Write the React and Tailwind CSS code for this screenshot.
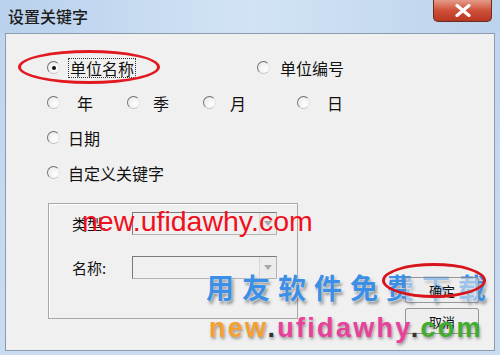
import React from 'react'

const cjk = "font-['Noto_Sans_CJK_SC','Noto_Sans',sans-serif]"

function Radio({ checked }) {
  return (
    <span className="relative w-[13px] h-[13px] shrink-0 rounded-full border-[1.5px] border-t-[#6f6f6f] border-l-[#6f6f6f] border-r-[#e4e4e4] border-b-[#c4c4c4] bg-[radial-gradient(circle_at_65%_65%,#ffffff,#e6e6e6)]">
      {checked && (
        <span className="absolute left-1/2 top-1/2 -translate-x-1/2 -translate-y-1/2 w-[4px] h-[4px] rounded-full bg-[#111]" />
      )}
    </span>
  )
}

function Option({ label, checked, width, gap = 'ml-[8px]', focus }) {
  return (
    <div className={`flex items-center ${width}`}>
      <Radio checked={checked} />
      <span
        className={`${gap} text-[16px] leading-none text-[#111] ${cjk} ${
          focus ? 'border border-dotted border-[#333] px-[1px] py-[1px]' : ''
        }`}
      >
        {label}
      </span>
    </div>
  )
}

function Combo() {
  return (
    <div className="w-[145px] h-[23px] flex border border-[#b4b4b4] border-t-[#7a7a7a] border-l-[#7a7a7a] bg-[#f0f0f0]">
      <div className="flex-1" />
      <div className="w-[17px] h-full flex items-center justify-center border-l border-[#d8d8d8] bg-[#ececec]">
        <svg width="8" height="5" viewBox="0 0 8 5">
          <path d="M0 0 L8 0 L4 5 Z" fill="#a8a8a8" />
        </svg>
      </div>
    </div>
  )
}

function Button({ label }) {
  return (
    <button className={`w-[74px] h-[26px] rounded-[3px] border border-[#707070]/70 bg-[#ececec]/55 text-[13px] leading-none text-[#111] ${cjk}`}>
      {label}
    </button>
  )
}

export default function App() {
  return (
    <div className="relative w-[500px] h-[355px] overflow-hidden bg-gradient-to-b from-[#bfd5ee] to-[#c9dcf0]">
      {/* title bar */}
      <div className="h-[33px] flex items-start justify-between bg-gradient-to-r from-[#b9d1ec] via-[#d2e3f5] to-[#bcd3ec]">
        <span className={`ml-[8px] mt-[6px] text-[16px] leading-[20px] font-medium text-[#1c1c1c] ${cjk}`}>设置关键字</span>
        <div className="mr-[8px] w-[59px] h-[22px] rounded-b-[5px] border border-t-0 border-[#6a2c22] bg-gradient-to-b from-[#e49a88] via-[#cf4f38] to-[#b83622] flex items-center justify-center">
          <svg width="16" height="13" viewBox="0 0 16 13">
            <path d="M2 1.5 L14 11.5 M14 1.5 L2 11.5" stroke="#fff" strokeWidth="3.2" strokeLinecap="round" />
          </svg>
        </div>
      </div>

      {/* dialog body */}
      <div className="mx-[5px] h-[318px] border border-[#8b9bb0] bg-[#f0f0f0] pt-[16px] pl-[41px]">
        <div className="flex h-[35px] items-center">
          <Option label="单位名称" checked focus width="w-[210px]" />
          <Option label="单位编号" width="w-[120px]" gap="ml-[10px]" />
        </div>
        <div className="flex h-[35px] items-center">
          <Option label="年" width="w-[80px]" gap="ml-[17px]" />
          <Option label="季" width="w-[76px]" gap="ml-[13px]" />
          <Option label="月" width="w-[94px]" gap="ml-[14px]" />
          <Option label="日" width="w-[60px]" gap="ml-[17px]" />
        </div>
        <div className="flex h-[35px] items-center">
          <Option label="日期" width="w-[120px]" />
        </div>
        <div className="flex h-[35px] items-center">
          <Option label="自定义关键字" width="w-[160px]" />
        </div>

        <div className="flex items-start mt-[13px]">
          <div className="ml-[1px] w-[250px] h-[116px] border border-[#a8a8a8] shadow-[inset_1px_1px_0_#fff] pt-[8px] pl-[23px]">
            <div className="flex items-center h-[23px]">
              <span className={`w-[60px] text-[15px] leading-none text-[#111] ${cjk}`}>类型:</span>
              <Combo />
            </div>
            <div className="flex items-center h-[23px] mt-[21px]">
              <span className={`w-[60px] text-[15px] leading-none text-[#111] ${cjk}`}>名称:</span>
              <Combo />
            </div>
          </div>
          <div className="relative z-10 ml-auto mr-[15px] mt-[74px] flex flex-col gap-[5px]">
            <Button label="确定" />
            <Button label="取消" />
          </div>
        </div>
      </div>

      {/* annotations & watermarks */}
      <div className="absolute left-[18px] top-[50px] w-[142px] h-[34px] rounded-[50%] border-[3px] border-[#e11a20]" />

      <div className="absolute left-[82px] top-[207px] text-[28.5px] leading-none text-[#f01020] font-['Liberation_Sans',Arial,sans-serif]">
        new.ufidawhy.com
      </div>

      <div className={`absolute left-[206px] top-[270px] text-[28px] leading-[34px] font-bold tracking-[8px] text-[#3b8fe6] ${cjk} [text-shadow:0_0_2px_#fff,2px_3px_3px_rgba(70,70,70,0.55)]`}>
        用友软件免费下载
      </div>

      <div className="absolute z-20 left-[382px] top-[263px] w-[104px] h-[35px] rounded-[50%] border-[3px] border-[#d8141c]" />

      <div className="absolute z-20 left-[209px] top-[312px] text-[27px] leading-[32px] font-bold tracking-[2.3px] font-['Liberation_Sans',Arial,sans-serif] [text-shadow:1px_2px_3px_rgba(60,60,60,0.5)]">
        <span className="text-[#f6a032]">new</span>
        <span className="text-[#333]">.</span>
        <span className="text-[#e8409b]">ufidawhy</span>
        <span className="text-[#333]">.</span>
        <span className="text-[#3fae30]">com</span>
      </div>
    </div>
  )
}
